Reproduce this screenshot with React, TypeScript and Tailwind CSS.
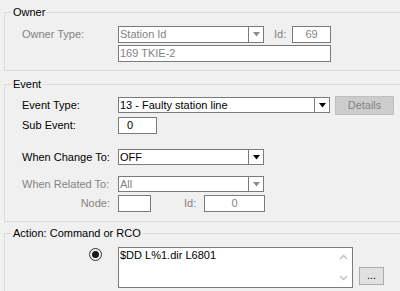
import React from 'react';

const GRAY = 'text-[#838383]';

function Arrow({ disabled }: { disabled?: boolean }) {
  return (
    <svg width="7" height="5" viewBox="0 0 7 5">
      <polygon points="0,0 7,0 3.5,4.5" fill={disabled ? '#8c8c8c' : '#000000'} />
    </svg>
  );
}

function Combo({ value, width, height, disabled }: { value: string; width: string; height: string; disabled?: boolean }) {
  return (
    <div className={`${width} ${height} flex border border-[#7a7a7a] bg-white`}>
      <div className={`flex-1 flex items-center pl-[1px] leading-none ${disabled ? GRAY : 'text-black'}`}>{value}</div>
      <div className="w-[15px] border-l border-[#7a7a7a] flex items-center justify-center">
        <Arrow disabled={disabled} />
      </div>
    </div>
  );
}

function Group({ title, height, children }: { title: string; height: string; children: React.ReactNode }) {
  return (
    <div className={`relative ${height} border-t border-l border-b border-[#dcdcdc]`}>
      <span className="absolute -top-[7px] left-[6px] px-[2px] bg-[#f0f0f0] leading-[13px] text-black">{title}</span>
      {children}
    </div>
  );
}

export default function App() {
  return (
    <div
      className="w-[400px] h-[291px] overflow-hidden bg-[#f0f0f0] pt-[12px] pl-[4px] text-[11px] leading-[13px] text-black"
      style={{ fontFamily: '"Liberation Sans", Arial, sans-serif' }}
    >
      {/* Owner */}
      <Group title="Owner" height="h-[59px]">
        <div className="mt-[13px] flex items-center h-[17px] pl-[17px]">
          <span className={`w-[96px] ${GRAY}`}>Owner Type:</span>
          <Combo value="Station Id" width="w-[146px]" height="h-[17px]" disabled />
          <span className={`ml-[10px] w-[18px] ${GRAY}`}>Id:</span>
          <div className={`w-[39px] h-[17px] border border-[#7a7a7a] bg-white flex items-center justify-center ${GRAY}`}>69</div>
        </div>
        <div className="mt-[2px] ml-[113px] w-[213px] h-[17px] border border-[#7a7a7a] bg-white flex items-center pl-[1px]">
          <span className={GRAY}>169 TKIE-2</span>
        </div>
      </Group>

      {/* Event */}
      <div className="mt-[13px]">
        <Group title="Event" height="h-[138px]">
          <div className="mt-[12px] flex items-start h-[16px] pl-[17px]">
            <span className="w-[96px] self-center">Event Type:</span>
            <Combo value="13 - Faulty station line" width="w-[212px]" height="h-[16px]" />
            <div className={`ml-[5px] -mt-[1px] w-[59px] h-[19px] bg-[#cccccc] border border-[#bfbfbf] flex items-center justify-center ${GRAY}`}>
              Details
            </div>
          </div>
          <div className="mt-[4px] flex items-center h-[17px] pl-[17px]">
            <span className="w-[96px]">Sub Event:</span>
            <div className="w-[39px] h-[17px] border border-[#7a7a7a] bg-white flex items-center pl-[8px]">0</div>
          </div>
          <div className="mt-[15px] flex items-center h-[16px] pl-[17px]">
            <span className="w-[96px]">When Change To:</span>
            <Combo value="OFF" width="w-[146px]" height="h-[16px]" />
          </div>
          <div className="mt-[11px] flex items-center h-[16px] pl-[17px]">
            <span className={`w-[96px] ${GRAY}`}>When Related To:</span>
            <Combo value="All" width="w-[146px]" height="h-[16px]" disabled />
          </div>
          <div className="mt-[3px] flex items-center h-[17px]">
            <span className={`w-[105px] text-right ${GRAY}`}>Node:</span>
            <div className="ml-[8px] w-[33px] h-[17px] border border-[#7a7a7a] bg-white" />
            <span className={`ml-[33px] w-[20px] ${GRAY}`}>Id:</span>
            <div className={`w-[61px] h-[17px] border border-[#7a7a7a] bg-white flex items-center justify-center ${GRAY}`}>0</div>
          </div>
        </Group>
      </div>

      {/* Action */}
      <div className="mt-[11px]">
        <Group title="Action: Command or RCO" height="h-[100px]">
          <div className="mt-[13px] flex items-start pl-[84px]">
            <div className="mt-[1px] w-[13px] h-[13px] rounded-full border border-[#333333] bg-[#f0f0f0] flex items-center justify-center">
              <div className="w-[7px] h-[7px] rounded-full bg-[#1a1a1a]" />
            </div>
            <div className="ml-[16px] w-[235px] h-[41px] border border-[#7a7a7a] bg-white flex">
              <div className="flex-1 pl-[1px] pt-[1px]">$DD L%1.dir L6801</div>
              <div className="w-[17px] flex flex-col items-center justify-between pt-[6px] pb-[6px]">
                <svg width="9" height="6" viewBox="0 0 9 6">
                  <polyline points="1,5 4.5,1.5 8,5" fill="none" stroke="#c2c2c2" strokeWidth="1.5" />
                </svg>
                <svg width="9" height="6" viewBox="0 0 9 6">
                  <polyline points="1,1 4.5,4.5 8,1" fill="none" stroke="#c2c2c2" strokeWidth="1.5" />
                </svg>
              </div>
            </div>
            <div className="ml-[6px] mt-[20px] w-[25px] h-[18px] bg-[#e1e1e1] border border-[#adadad] flex items-center justify-center leading-none pb-[2px]">
              ...
            </div>
          </div>
        </Group>
      </div>
    </div>
  );
}
